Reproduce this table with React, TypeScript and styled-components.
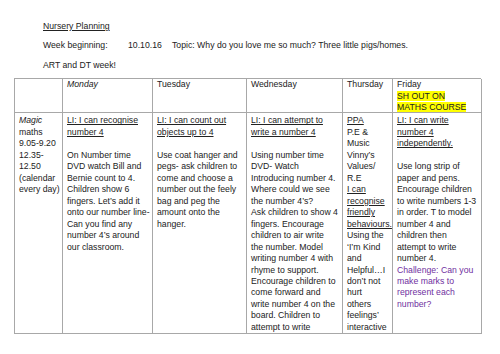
import React from "react";
import styled, { createGlobalStyle } from "styled-components";

const GlobalStyle = createGlobalStyle`
  html, body {
    margin: 0;
    padding: 0;
    background: #ffffff;
  }
  body {
    font-family: "Liberation Sans", Arial, sans-serif;
    color: #222222;
  }
`;

const Page = styled.div`
  width: 500px;
  height: 354px;
  box-sizing: border-box;
  padding: 21px 0 0 14px;
  font-size: 8.7px;
  line-height: 11.47px;
  overflow: hidden;
`;

const Intro = styled.div`
  margin-left: 29px;
  display: flex;
  flex-direction: column;
  gap: 8px;
  margin-bottom: 7px;
`;

const Title = styled.div`
  text-decoration: underline;
`;

const WeekRow = styled.div`
  display: flex;
  white-space: nowrap;
`;

const Field = styled.span<{ $w?: number }>`
  display: inline-block;
  width: ${(p) => (p.$w ? `${p.$w}px` : "auto")};
`;

const Grid = styled.div`
  display: grid;
  grid-template-columns: 48px 90px 94px 96px 50px 89px;
  grid-template-rows: 34px 221px;
  width: 467px;
  border-top: 1px solid #a8a8a8;
  border-left: 1px solid #a8a8a8;
  box-sizing: border-box;
`;

const Cell = styled.div<{ $head?: boolean }>`
  border-right: 1px solid #a8a8a8;
  border-bottom: 1px solid #a8a8a8;
  padding: ${(p) => (p.$head ? "0 4px" : "2px 4px 0")};
  overflow: hidden;
  white-space: nowrap;
`;

const Line = styled.div<{ $u?: boolean; $i?: boolean; $tone?: "purple" }>`
  text-decoration: ${(p) => (p.$u ? "underline" : "none")};
  font-style: ${(p) => (p.$i ? "italic" : "normal")};
  color: ${(p) => (p.$tone === "purple" ? "#7030a0" : "inherit")};
`;

const Mark = styled.span`
  background: #ffff00;
`;

type L = { t: string; u?: boolean; i?: boolean; p?: boolean };

const lines = (arr: (string | L)[]) =>
  arr.map((x) => (typeof x === "string" ? { t: x } : x));

const body: L[][] = [
  lines([
    { t: "Magic", i: true },
    "maths",
    "9.05-9.20",
    "12.35-",
    "12.50",
    "(calendar",
    "every day)",
  ]),
  lines([
    { t: "LI: I can recognise", u: true },
    { t: "number 4", u: true },
    "",
    "On Number time",
    "DVD watch Bill and",
    "Bernie count to 4.",
    "Children show 6",
    "fingers. Let\u2019s add it",
    "onto our number line-",
    "Can you find any",
    "number 4\u2019s around",
    "our classroom.",
  ]),
  lines([
    { t: "LI: I can count out", u: true },
    { t: "objects up to 4", u: true },
    "",
    "Use coat hanger and",
    "pegs- ask children to",
    "come and choose a",
    "number out the feely",
    "bag and peg the",
    "amount onto the",
    "hanger.",
  ]),
  lines([
    { t: "LI: I can attempt to", u: true },
    { t: "write a number 4", u: true },
    "",
    "Using number time",
    "DVD- Watch",
    "Introducing number 4.",
    "Where could we see",
    "the number 4\u2019s?",
    "Ask children to show 4",
    "fingers. Encourage",
    "children to air write",
    "the number. Model",
    "writing number 4 with",
    "rhyme to support.",
    "Encourage children to",
    "come forward and",
    "write number 4 on the",
    "board. Children to",
    "attempt to write",
  ]),
  lines([
    { t: "PPA", u: true },
    "P.E &",
    "Music",
    "Vinny\u2019s",
    "Values/",
    "R.E",
    { t: "I can", u: true },
    { t: "recognise", u: true },
    { t: "friendly", u: true },
    { t: "behaviours.", u: true },
    "Using the",
    "\u2018I\u2019m Kind",
    "and",
    "Helpful\u2026I",
    "don\u2019t not",
    "hurt",
    "others",
    "feelings\u2019",
    "interactive",
  ]),
  lines([
    { t: "LI: I can write", u: true },
    { t: "number 4", u: true },
    { t: "independently.", u: true },
    "",
    "Use long strip of",
    "paper and pens.",
    "Encourage children",
    "to write numbers 1-3",
    "in order. T to model",
    "number 4 and",
    "children then",
    "attempt to write",
    "number 4.",
    { t: "Challenge: Can you", p: true },
    { t: "make marks to", p: true },
    { t: "represent each", p: true },
    { t: "number?", p: true },
  ]),
];

function App() {
  return (
    <>
      <GlobalStyle />
      <Page>
        <Intro>
          <Title>Nursery Planning</Title>
          <WeekRow>
            <Field $w={85}>Week beginning:</Field>
            <Field $w={44}>10.10.16</Field>
            <Field>Topic: Why do you love me so much? Three little pigs/homes.</Field>
          </WeekRow>
          <div>ART and DT week!</div>
        </Intro>
        <Grid>
          <Cell $head />
          <Cell $head>
            <Line $i>Monday</Line>
          </Cell>
          <Cell $head>
            <Line>Tuesday</Line>
          </Cell>
          <Cell $head>
            <Line>Wednesday</Line>
          </Cell>
          <Cell $head>
            <Line>Thursday</Line>
          </Cell>
          <Cell $head>
            <Line>Friday</Line>
            <Line>
              <Mark>SH OUT ON</Mark>
            </Line>
            <Line>
              <Mark>MATHS COURSE</Mark>
            </Line>
          </Cell>
          {body.map((col, ci) => (
            <Cell key={ci}>
              {col.map((l, li) => (
                <Line key={li} $u={l.u} $i={l.i} $tone={l.p ? "purple" : undefined}>
                  {l.t || "\u00a0"}
                </Line>
              ))}
            </Cell>
          ))}
        </Grid>
      </Page>
    </>
  );
}

export default App;
